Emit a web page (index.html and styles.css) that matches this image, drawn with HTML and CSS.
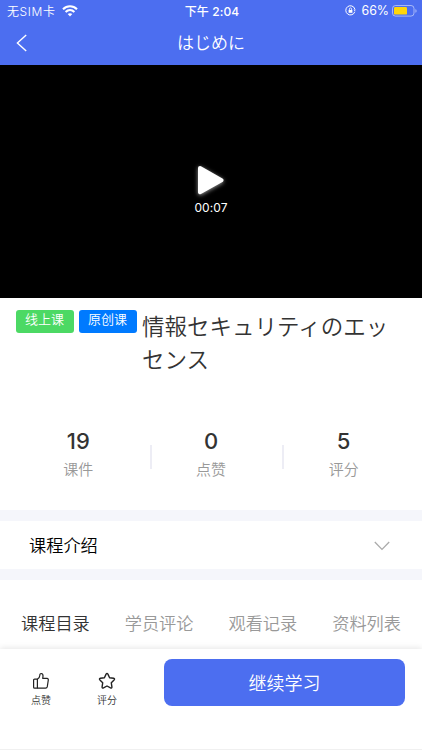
FILE: index.html
```html
<!DOCTYPE html>
<html lang="zh-CN">
<head>
  <meta charset="UTF-8" />
  <meta name="viewport" content="width=device-width, initial-scale=1.0"/>
  <title>はじめに</title>
  <link rel="stylesheet" href="styles.css">
</head>
<body>

  <header class="header">
    <div class="status-bar">
      <div class="status-left">
        <span class="carrier">无SIM卡</span>
        <svg class="wifi" width="16" height="12" viewBox="0 0 16 12" fill="none" stroke="#fff" stroke-width="2.1">
          <path d="M1 4.2C5 .3 11 .3 15 4.2"/>
          <path d="M3.6 7C6.2 4.5 9.8 4.5 12.4 7"/>
          <path d="M5.7 9.1C7 7.9 9 7.9 10.3 9.1L8 11.5Z" fill="#fff" stroke="none"/>
        </svg>
      </div>
      <div class="status-time">下午 2:04</div>
      <div class="status-right">
        <svg class="lock" width="11" height="11" viewBox="0 0 11 11" fill="none" stroke="#fff">
          <path d="M9.8 6.7A4.6 4.6 0 1 1 9.8 4"/>
          <path d="M8.5 4.5h2.3L9.8 6.2Z" fill="#fff" stroke="none"/>
          <rect x="3.6" y="5" width="3.8" height="2.8" fill="#fff" stroke="none"/>
          <path d="M4.4 5V4a1.1 1.1 0 0 1 2.2 0v1" stroke-width=".8"/>
        </svg>
        <span class="percent">66%</span>
        <svg width="25" height="12" viewBox="0 0 25 12">
          <rect x=".5" y=".5" width="21.5" height="10.6" rx="3" fill="none" stroke="#fff" stroke-opacity=".5"/>
          <rect x="2" y="2" width="13" height="7.6" rx="1.2" fill="#ffd60a"/>
          <path d="M23.4 4v3.8q1.2-.6 1.2-1.9T23.4 4Z" fill="#fff" fill-opacity=".5"/>
        </svg>
      </div>
    </div>
    <div class="nav-bar">
      <svg class="back" width="12" height="18" viewBox="0 0 12 18" fill="none" stroke="#fff" stroke-width="1.4">
        <path d="M10.2 .9L1.4 9l8.8 8.1"/>
      </svg>
      <h1 class="nav-title" lang="ja">はじめに</h1>
    </div>
  </header>

  <div class="video">
    <svg class="play" width="40" height="40" viewBox="0 0 40 40">
      <path d="M9 8L30.5 20.2L9 32.2Z" fill="#fff" stroke="#fff" stroke-width="4" stroke-linejoin="round"/>
    </svg>
    <span class="duration">00:07</span>
  </div>

  <section class="course">
    <div class="course-head">
      <span class="tag tag-green">线上课</span>
      <span class="tag tag-blue">原创课</span>
      <h2 class="course-title" lang="ja">情報セキュリティのエッセンス</h2>
    </div>
    <div class="stats">
      <div class="stat"><b>19</b><span>课件</span></div>
      <div class="stat"><b>0</b><span>点赞</span></div>
      <div class="stat"><b>5</b><span>评分</span></div>
    </div>
  </section>

  <section class="intro">
    <span class="intro-title">课程介绍</span>
    <svg width="16" height="10" viewBox="0 0 16 10" fill="none" stroke="#aaa" stroke-width="1.3">
      <path d="M.8 1L8 8.4L15.2 1"/>
    </svg>
  </section>

  <nav class="tabs">
    <span class="tab active">课程目录</span>
    <span class="tab">学员评论</span>
    <span class="tab">观看记录</span>
    <span class="tab">资料列表</span>
  </nav>

  <footer class="bottom-bar">
    <div class="action">
      <svg width="18" height="18" viewBox="0 0 18 18" fill="none" stroke="#222" stroke-width="1.2" stroke-linejoin="round">
        <path d="M5.4 7.1H2.6Q1.6 7.1 1.6 8.1V15.2Q1.6 16.2 2.6 16.2H5.4Z"/>
        <path d="M5.4 7.1Q7.7 6 7.8 3.6Q7.7 1.5 9.3 1.5Q11.2 1.7 11 4.3L10.7 6.3H15Q16.5 6.5 16.3 8L15.3 14.7Q15 16.2 13.6 16.2H5.4"/>
      </svg>
      <span>点赞</span>
    </div>
    <div class="action">
      <svg width="18" height="18" viewBox="0 0 18 18" fill="none" stroke="#222" stroke-width="1.4" stroke-linejoin="round">
        <path d="M8.1 2.1Q9 .7 9.9 2.1L11.6 5.7L15.6 6.3Q17.2 6.7 16.1 7.9L13.3 10.8L13.9 14.9Q13.9 16.5 12.5 15.9L9 14L5.5 15.9Q4.1 16.5 4.1 14.9L4.7 10.8L1.9 7.9Q.8 6.7 2.4 6.3L6.4 5.7Z"/>
      </svg>
      <span>评分</span>
    </div>
    <button class="continue-btn">继续学习</button>
  </footer>

</body>
</html>
```
FILE: styles.css
```css
* {
  box-sizing: border-box;
  margin: 0;
  padding: 0;
}

body {
  display: flex;
  flex-direction: column;
  height: 750px;
  overflow: hidden;
  font-family: Inter, "Noto Sans CJK SC", sans-serif;
  font-weight: 350;
  background-color: #f5f6fb;
  color: #333;
}

svg {
  display: block;
  flex: none;
}

.header {
  height: 65px;
  background-color: #4c6ef0;
  color: white;
}

.status-bar {
  display: grid;
  grid-template-columns: 1fr auto 1fr;
  align-items: center;
  height: 21px;
  padding: 0 5px 0 7px;
  font-size: 12px;
}

.status-left,
.status-right {
  display: flex;
  align-items: center;
}

.status-left {
  gap: 6px;
}

.carrier {
  letter-spacing: 0.6px;
}

.status-time {
  font-weight: 500;
  letter-spacing: 0.1px;
}

.status-right {
  justify-content: flex-end;
}

.percent {
  margin: 0 3px 0 5px;
  font-size: 12.4px;
  font-weight: 400;
}

.nav-bar {
  display: grid;
  grid-template-columns: 12px 1fr 12px;
  align-items: center;
  height: 44px;
  padding: 0 16px;
}

.nav-title {
  font-family: "Noto Sans CJK JP", sans-serif;
  font-size: 17px;
  font-weight: 350;
  text-align: center;
  line-height: 38px;
  padding-bottom: 3px;
}

.video {
  display: flex;
  flex-direction: column;
  align-items: center;
  height: 233px;
  padding-top: 95px;
  background-color: black;
  color: white;
}

.play {
  filter: drop-shadow(0 1px 2px rgba(255, 255, 255, 0.6));
}

.duration {
  font-size: 12px;
  font-weight: 400;
  line-height: 15px;
  letter-spacing: 0.1px;
}

.course {
  height: 212px;
  padding-top: 11px;
  background-color: white;
}

.course-head {
  display: flex;
  align-items: flex-start;
  height: 67px;
  padding: 0 16px;
}

.tag {
  flex: none;
  width: 58px;
  height: 23px;
  margin: 1px 5px 0 0;
  padding-right: 1px;
  border-radius: 3px;
  font-size: 13px;
  line-height: 19px;
  text-align: center;
  color: white;
}

.tag-green {
  background-color: #4cd964;
}

.tag-blue {
  background-color: #007aff;
}

.course-title {
  width: 250px;
  font-family: "Noto Sans CJK JP", sans-serif;
  font-size: 22.5px;
  font-weight: 350;
  line-height: 33px;
}

.stats {
  display: grid;
  grid-template-columns: repeat(3, 1fr);
  padding: 51px 12px 0;
}

.stat {
  position: relative;
  display: flex;
  flex-direction: column;
  align-items: center;
}

.stat b {
  font-size: 22px;
  font-weight: 500;
  line-height: 29px;
}

.stat span {
  font-size: 15px;
  line-height: 27px;
  color: #999;
}

.stat + .stat::before {
  content: "";
  position: absolute;
  top: 18px;
  left: 5px;
  width: 2px;
  height: 24px;
  background-color: #ededf5;
}

.intro {
  display: flex;
  align-items: center;
  justify-content: space-between;
  height: 48px;
  margin: 11px 0;
  padding: 2px 32px 0 29px;
  background-color: white;
  color: black;
}

.intro-title {
  padding-bottom: 3px;
  font-size: 17.2px;
}

.tabs {
  display: flex;
  justify-content: space-between;
  height: 69px;
  padding: 31px 21px 0;
  background-color: white;
}

.tab {
  font-size: 17.2px;
  line-height: 25px;
  color: #999;
}

.tab.active {
  color: #333;
}

.bottom-bar {
  position: relative;
  display: flex;
  align-items: flex-start;
  height: 101px;
  padding: 10px 17px 0 8px;
  background-color: white;
  border-bottom: 1px solid #f0f0f0;
  box-shadow: 0 -1px 6px rgba(0, 0, 0, 0.1);
}

.action {
  display: flex;
  flex-direction: column;
  align-items: center;
  width: 66px;
  padding-top: 13px;
  font-size: 10px;
  line-height: 21px;
}

.continue-btn {
  flex: 1;
  height: 47px;
  margin-left: 24px;
  padding-bottom: 2px;
  border: none;
  border-radius: 8px;
  background-color: #4c6ef0;
  color: white;
  font-family: inherit;
  font-size: 18px;
  font-weight: 350;
  cursor: pointer;
}
```
